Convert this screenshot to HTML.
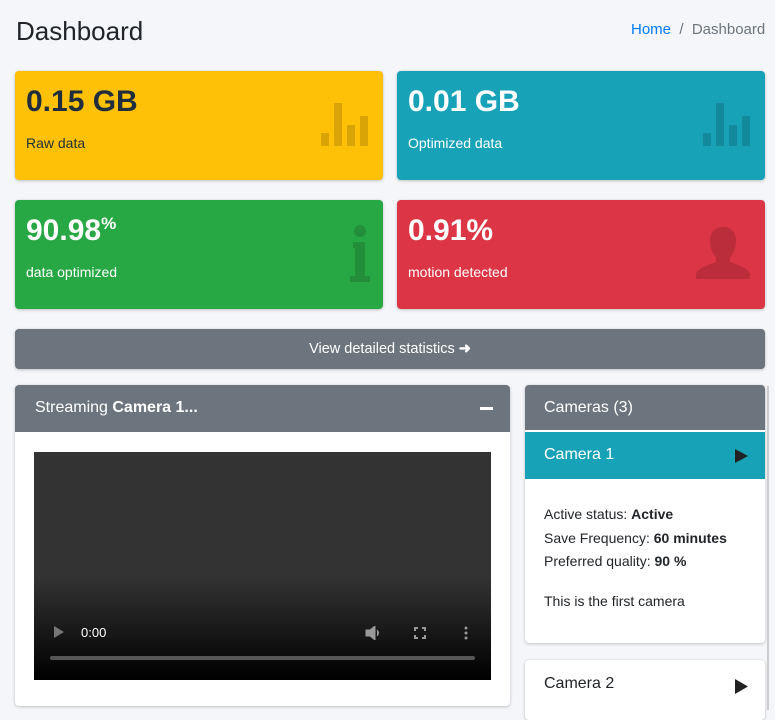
<!DOCTYPE html>
<html><head><style>
*{margin:0;padding:0;box-sizing:border-box}
body{width:775px;height:710px;overflow:hidden;background:#f4f6f9;font-family:"Liberation Sans",sans-serif;color:#212529;position:relative}
.a{position:absolute}
.box{position:absolute;border-radius:4px;box-shadow:0 0 1px rgba(0,0,0,.13),0 1px 3px rgba(0,0,0,.2)}
.big{position:absolute;left:11px;top:14px;font-size:30px;font-weight:bold}
.lbl{position:absolute;left:11px;top:64px;font-size:14px}
.card{position:absolute;background:#fff;border-radius:4px;box-shadow:0 0 1px rgba(0,0,0,.13),0 1px 3px rgba(0,0,0,.2);overflow:hidden}
</style></head><body>
<div class="a" style="left:16px;top:16px;font-size:26px;color:#212529">Dashboard</div>
<div class="a" style="left:631px;top:21px;font-size:15px;color:#6c757d"><span style="color:#007bff">Home</span>&nbsp; / &nbsp;Dashboard</div>

<div class="box" style="left:15px;top:71px;width:368px;height:109px;background:#ffc107;color:#1f2d3d">
<div class="big">0.15 GB</div><div class="lbl">Raw data</div>
<svg class="a" style="left:306px;top:32px" width="48" height="43"><g fill="rgba(0,0,0,.15)"><rect x="0" y="30" width="8" height="13"/><rect x="13" y="0" width="8" height="43"/><rect x="26" y="22" width="8" height="21"/><rect x="39" y="13" width="8" height="30"/></g></svg>
</div>
<div class="box" style="left:397px;top:71px;width:368px;height:109px;background:#17a2b8;color:#fff">
<div class="big">0.01 GB</div><div class="lbl">Optimized data</div>
<svg class="a" style="left:306px;top:32px" width="48" height="43"><g fill="rgba(0,0,0,.15)"><rect x="0" y="30" width="8" height="13"/><rect x="13" y="0" width="8" height="43"/><rect x="26" y="22" width="8" height="21"/><rect x="39" y="13" width="8" height="30"/></g></svg>
</div>
<div class="box" style="left:15px;top:200px;width:368px;height:109px;background:#28a745;color:#fff">
<div class="big">90.98<sup style="font-size:17px">%</sup></div><div class="lbl">data optimized</div>
<svg class="a" style="left:334px;top:24px" width="22" height="58"><g fill="rgba(0,0,0,.15)"><circle cx="11" cy="7" r="6"/><path d="M4 18h12v34h5v6H1v-6h5V24H4z"/></g></svg>
</div>
<div class="box" style="left:397px;top:200px;width:368px;height:109px;background:#dc3545;color:#fff">
<div class="big">0.91%</div><div class="lbl">motion detected</div>
<svg class="a" style="left:299px;top:27px" width="54" height="52"><path fill="rgba(0,0,0,.15)" d="M27 0c-9 0-13 6-13 14 0 7 3 13 6 17v4C12 38 2 41 0 47v5h54v-5c-2-6-12-9-20-12v-4c3-4 6-10 6-17 0-8-4-14-13-14z"/></svg>
</div>

<div class="box" style="left:15px;top:329px;width:750px;height:40px;background:#6c757d;color:#fff;text-align:center;line-height:40px;font-size:14.5px">View detailed statistics <b>&#10140;</b></div>

<div class="card" style="left:15px;top:385px;width:495px;height:321px">
<div style="background:#6c757d;height:47px;color:#fff;font-size:16px;line-height:46px;padding-left:20px">Streaming <b>Camera 1...</b><span style="position:absolute;right:17px;top:22px;width:13px;height:3px;background:#fff"></span></div>
<div class="a" style="left:19px;top:67px;width:457px;height:228px;background:linear-gradient(#333 0,#333 55%,#000 100%)">
<svg class="a" style="left:19px;top:173px" width="12" height="14"><path d="M1 1l10 6-10 6z" fill="#777"/></svg>
<div class="a" style="left:47px;top:173px;color:#fff;font-size:13px">0:00</div>
<svg class="a" style="left:331px;top:174px" width="16" height="14"><path d="M1 4h4l5-4v14l-5-4H1z M12 4q3 3 0 6" fill="#999" stroke="#999"/></svg>
<svg class="a" style="left:380px;top:175px" width="12" height="12" fill="none" stroke="#999" stroke-width="2"><path d="M1 4V1h3M8 1h3v3M11 8v3H8M4 11H1V8"/></svg>
<svg class="a" style="left:430px;top:174px" width="4" height="14" fill="#999"><circle cx="2" cy="2" r="1.5"/><circle cx="2" cy="7" r="1.5"/><circle cx="2" cy="12" r="1.5"/></svg>
<div class="a" style="left:16px;top:204px;width:425px;height:4px;border-radius:2px;background:#555"></div>
</div>
</div>

<div class="card" style="left:525px;top:385px;width:240px;height:258px">
<div style="background:#6c757d;height:45px;color:#fff;font-size:16px;line-height:45px;padding-left:19px">Cameras (3)</div>
<div style="background:#17a2b8;height:47px;margin-top:2px;color:#fff;font-size:16px;line-height:45px;padding-left:19px;position:relative">Camera 1<svg class="a" style="right:17px;top:17px" width="13" height="14"><path d="M0 0l13 7-13 7z" fill="#222"/></svg></div>
<div style="padding:24px 19px;font-size:14px;line-height:23.5px">Active status: <b>Active</b><br>Save Frequency: <b>60 minutes</b><br>Preferred quality: <b>90 %</b><div style="margin-top:16px">This is the first camera</div></div>
</div>
<div class="card" style="left:525px;top:660px;width:240px;height:60px">
<div style="font-size:16px;padding:15px 19px">Camera 2</div>
<svg class="a" style="right:17px;top:19px" width="13" height="15"><path d="M0 0l13 7.5-13 7.5z" fill="#222"/></svg>
</div>
<div class="a" style="left:767px;top:386px;width:2px;height:324px;background:#ccc"></div>
</body></html>
